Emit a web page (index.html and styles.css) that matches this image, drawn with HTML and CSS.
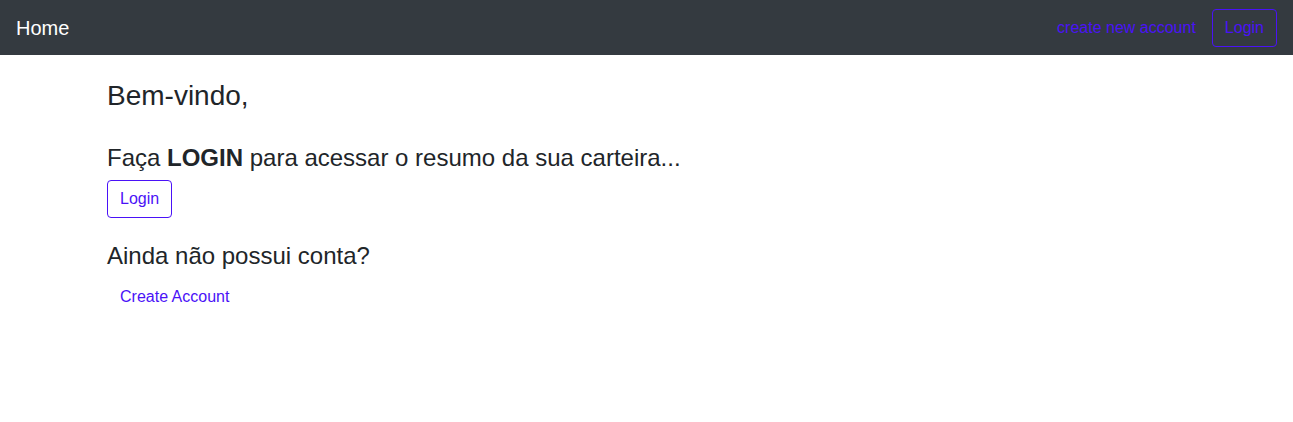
FILE: index.html
```html
<!DOCTYPE html>
<html lang="pt">
<head>
<meta charset="utf-8">
<title>Home</title>
<link rel="stylesheet" href="styles.css">
</head>
<body>
<nav class="navbar">
  <a class="brand" href="#">Home</a>
  <div class="nav-right">
    <a class="nav-link" href="#">create new account</a>
    <a class="btn btn-outline nav-btn" href="#">Login</a>
  </div>
</nav>
<main class="content">
  <h3 class="welcome">Bem-vindo,</h3>
  <h4 class="prompt">Faça <strong>LOGIN</strong> para acessar o resumo da sua carteira...</h4>
  <a class="btn btn-outline" href="#">Login</a>
  <h4 class="prompt second">Ainda não possui conta?</h4>
  <a class="btn btn-link" href="#">Create Account</a>
</main>
</body>
</html>
```
FILE: styles.css
```css
* { box-sizing: border-box; }
body {
  margin: 0;
  font-family: "Liberation Sans", Arial, sans-serif;
  font-size: 16px;
  line-height: 1.5;
  color: #212529;
  background: #fff;
}
a { text-decoration: none; }
.navbar {
  height: 55px;
  background: #343a40;
  display: flex;
  align-items: center;
  justify-content: space-between;
  padding: 0 16px;
}
.brand {
  color: #fff;
  font-size: 20px;
  line-height: 30px;
}
.nav-right {
  display: flex;
  align-items: center;
  gap: 8px;
}
.nav-link {
  color: #4a12f7;
  padding: 8px;
}
.btn {
  display: inline-block;
  padding: 6px 12px;
  border: 1px solid transparent;
  border-radius: 4px;
  font-size: 16px;
  line-height: 24px;
  color: #4a12f7;
}
.btn-outline { border-color: #4a12f7; }
.content {
  padding: 24px 107px 0;
  display: flex;
  flex-direction: column;
  align-items: flex-start;
}
h3, h4 { font-weight: 400; line-height: 1.2; margin: 0 0 8px; }
.welcome { font-size: 28px; margin-bottom: 31px; }
.prompt { font-size: 24px; }
.prompt strong { font-weight: 700; }
.second { margin-top: 24px; margin-bottom: 7px; }
```
